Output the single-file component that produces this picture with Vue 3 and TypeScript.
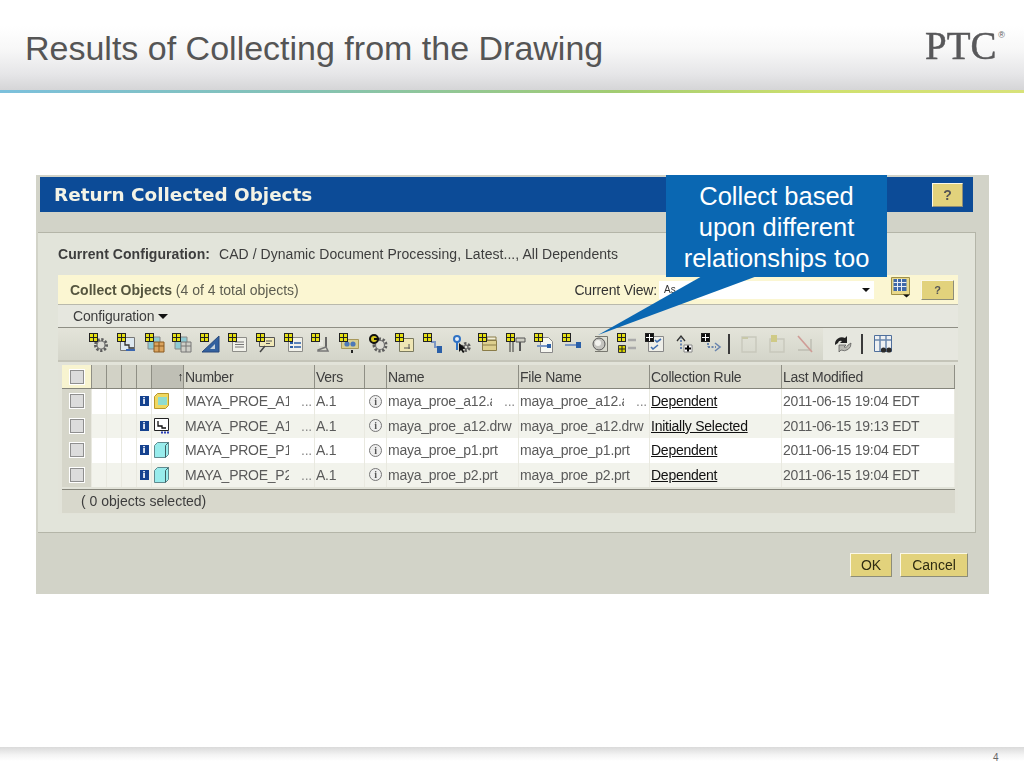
<script setup lang="ts">
interface Shape { d: string; fill?: string; stroke?: string; sw?: number; dash?: string }
interface Tool { badge?: boolean; dark?: boolean; shapes: Shape[] }

const rect = (x: number, y: number, w: number, h: number, fill = 'none', stroke = 'none', sw = 1): Shape => ({
  d: `M${x} ${y}h${w}v${h}h${-w}z`, fill, stroke, sw,
})
const line = (d: string, stroke: string, sw = 1, dash?: string): Shape => ({ d, stroke, sw, dash, fill: 'none' })
const circ = (cx: number, cy: number, r: number, fill = 'none', stroke = 'none', sw = 1, dash?: string): Shape => ({
  d: `M${cx - r} ${cy}a${r} ${r} 0 1 0 ${2 * r} 0a${r} ${r} 0 1 0 ${-2 * r} 0z`, fill, stroke, sw, dash,
})
const gear = (cx: number, cy: number, r = 5.5): Shape[] => [
  circ(cx, cy, r, 'none', '#5d5d5d', 3, '2.2 1.6'),
  circ(cx, cy, r - 1.5, '#dcdcd4', '#6f6f6f', 1.2),
]
const doc = (x = 5, y = 5, w = 14, h = 14): Shape => rect(x + 0.5, y + 0.5, w, h, '#f1f1ea', '#8d8d88')

const tools: Tool[] = [
  { badge: true, shapes: gear(13, 13) },
  { badge: true, shapes: [rect(4.5, 5.5, 14, 13, '#dde8f0', '#777'), line('M9 9v4h4v3h5', '#333', 1.3), line('M10 18h9', '#3a66b0', 2)] },
  { badge: true, shapes: [rect(4, 5, 12, 12, '#8ecbd4', '#888'), rect(10, 10, 10, 10, '#dba45e', '#8a5a20'), line('M15 10v10M10 14h10', '#8a5a20')] },
  { badge: true, shapes: [rect(4, 5, 12, 12, '#8ecbd4', '#888'), rect(10, 10, 10, 10, '#cfcfc8', '#777'), line('M15 10v10M10 14h10', '#777')] },
  { badge: true, shapes: [{ d: 'M3 20L20 4V20z', fill: '#33619f', stroke: '#28497c', sw: 1 }, { d: 'M11 17L16 12V17z', fill: '#c7d2da' }] },
  { badge: true, shapes: [doc(), line('M8 10h9M8 12.500h9M8 15h9', '#777')] },
  { badge: true, shapes: [rect(4.5, 5.5, 15, 9, '#f1e9b8', '#555'), line('M10 14L5 20', '#444', 1.5), line('M11 9h6M11 11.500h4', '#555')] },
  { badge: true, shapes: [doc(), rect(7, 10, 3, 2, '#2a5fa8'), rect(7, 14, 3, 2, '#2a5fa8'), line('M11 11h7M11 15h7', '#2a5fa8', 1.4)] },
  { badge: true, shapes: [line('M16 5v10', '#666', 2), line('M8 18l8-3 2 4H8z', '#777', 1.5), rect(9, 8, 4, 6, '#e9e9e2')] },
  { badge: true, shapes: [rect(3.5, 7.5, 17, 9, '#d8ce90', '#a8985a'), circ(9, 12, 2.6, '#4d79b8'), circ(15, 12, 2.6, '#4d79b8'), rect(13, 18, 2, 3, '#222')] },
  { shapes: [...gear(14, 13, 6), circ(8, 7, 4, '#d8c820', '#111', 2), line('M8 7h5', '#111', 2)] },
  { badge: true, shapes: [rect(5.5, 6.5, 14, 13, '#efe6b4', '#7a7a60'), line('M10 16h6M15 12v5', '#555')] },
  { badge: true, shapes: [line('M9 10h4v5h4', '#7a96c4', 2), rect(15, 14, 5, 7, '#2a5fa8')] },
  { shapes: [circ(8, 7, 3, '#e8eef8', '#2f72c4', 2), line('M8 10v8', '#2f72c4', 2), ...gear(17, 15, 3.4), { d: 'M10 11l0 9 2-2 2 3 1.500-1-2-3 3-.5z', fill: '#111' }] },
  { badge: true, shapes: [rect(5.5, 8.5, 14, 10, '#ddcf8e', '#8a7c48'), line('M6 13h13', '#8a7c48'), rect(10, 5, 9, 3, '#f2efd8', '#8a7c48')] },
  { badge: true, shapes: [line('M5 10v10M8 10v10', '#6d6d68', 1.5), rect(11, 6, 9, 4, '#cfcfc4', '#555'), line('M15 10v9', '#555', 2)] },
  { badge: true, shapes: [{ d: 'M7.500 5.500h8l4 4v11h-12z', fill: '#f6f6f0', stroke: '#888', sw: 1 }, line('M4 14h11', '#7a96c4', 2), rect(14, 12, 4, 4, '#2a5fa8')] },
  { badge: true, shapes: [line('M4 13h12', '#7a96c4', 2), rect(15, 10, 5, 6, '#2a5fa8')] },
  { shapes: [line('M7 4.500h12.500v15H7', '#77776f', 1), circ(11, 12, 6, '#c4c4bf', '#555', 1), circ(10, 11, 3, '#f2f2ee')] },
  { badge: true, shapes: [rect(2.5, 13.5, 7, 7, '#d8d400', '#333'), line('M6 14v6M3 17h6', '#222'), line('M12 8h8M12 16h8', '#aaa', 2.4)] },
  { dark: true, badge: true, shapes: [rect(4.5, 4.5, 15, 15, '#eeeee8', '#888'), line('M11 8l2 2 4-3M7 15l2 2 5-4', '#3f6fb0', 1.6)] },
  { shapes: [line('M9 17V6', '#6a85ae', 2, '2 1.500'), line('M5 9l4-5 4 5', '#333', 1.3), rect(12, 13, 8, 7, '#fff', '#888'), { d: 'M16 13.500v6M13 16.500h6', stroke: '#000', sw: 2, fill: 'none' }] },
  { dark: true, badge: true, shapes: [line('M8 15h8', '#6a85ae', 2, '2 1.500'), line('M8 11v4', '#6a85ae', 2, '2 1.500'), line('M15 11l5 4-5 4', '#6a85ae', 1.6)] },
]
const disabled: Tool[] = [
  { shapes: [line('M5 5h14v15H5z', '#c8c8bc', 1.4), rect(5, 5, 6, 2, '#c8c8a8')] },
  { shapes: [line('M5 7h14v13H5z', '#c8c8bc', 1.4), rect(6, 3, 6, 7, '#cfca86')] },
  { shapes: [line('M5 18h13V7', '#bdbdb2', 1.4), line('M5 4l14 16', '#cf9c96', 1.6)] },
]
const refresh: Tool = { shapes: [
  { d: 'M4 13a7 7 0 0 1 10-7l2-2v7h-7l2-2a3 3 0 0 0-4 2z', fill: '#222' },
  { d: 'M20 11a7 7 0 0 1-10 7l-2 2v-7h7l-2 2a3 3 0 0 0 4-2z', fill: '#b9b9b2', stroke: '#555', sw: 0.7 },
] }
const finder: Tool = { shapes: [
  rect(3.5, 3.5, 17, 16, '#eef0f2', '#4f6f9c'),
  line('M9 4v15M15 4v15M4 8h16', '#6a86ad', 1.5),
  circ(12.5, 18, 2.6, '#2a2a2a'), circ(18, 18, 2.6, '#2a2a2a'),
] }

interface Row { number: string; name: string; nameCut: boolean; file: string; rule: string; modified: string; kind: 'asm' | 'drw' | 'prt' }
const rows: Row[] = [
  { number: 'MAYA_PROE_A12', name: 'maya_proe_a12.asm', nameCut: true, file: 'maya_proe_a12.asm', rule: 'Dependent', modified: '2011-06-15 19:04 EDT', kind: 'asm' },
  { number: 'MAYA_PROE_A12', name: 'maya_proe_a12.drw', nameCut: false, file: 'maya_proe_a12.drw', rule: 'Initially Selected', modified: '2011-06-15 19:13 EDT', kind: 'drw' },
  { number: 'MAYA_PROE_P1', name: 'maya_proe_p1.prt', nameCut: false, file: 'maya_proe_p1.prt', rule: 'Dependent', modified: '2011-06-15 19:04 EDT', kind: 'prt' },
  { number: 'MAYA_PROE_P2', name: 'maya_proe_p2.prt', nameCut: false, file: 'maya_proe_p2.prt', rule: 'Dependent', modified: '2011-06-15 19:04 EDT', kind: 'prt' },
]
</script>

<template>
  <div class="page">
    <header class="head">
      <h1 class="title">Results of Collecting from the Drawing</h1>
      <div class="logo"><span class="logo-text">PTC</span><sup class="reg">®</sup></div>
    </header>
    <div class="rule-line"></div>

    <main class="stage">
      <section class="dialog">
        <div class="dialog-bar">
          <span class="dialog-title">Return Collected Objects</span>
          <button class="gold help-big" type="button">?</button>
        </div>

        <div class="panel">
          <p class="config"><b>Current Configuration:</b><span>CAD / Dynamic Document Processing, Latest..., All Dependents</span></p>

          <div class="table-box">
            <div class="table-head">
              <span class="table-name"><b>Collect Objects</b> (4 of 4 total objects)</span>
              <span class="view-label">Current View:</span>
              <div class="select"><span class="select-val">As</span><i class="caret"></i></div>
              <svg class="view-icon" width="20" height="21" viewBox="0 0 20 21">
                <path d="M.5.5h18v17H.5z" fill="#e9d98a" stroke="#a09048" />
                <path d="M2.500 2h13v12h-13z" fill="#3f68a8" />
                <path d="M6.500 2v12M10.500 2v12M2.500 5.500h13M2.500 9.500h13" stroke="#e9edf2" />
                <path d="M12 17.500h7l-3.500 3z" fill="#111" />
              </svg>
              <button class="gold help-small" type="button">?</button>
            </div>

            <div class="menu-bar"><span>Configuration</span><i class="caret menu-caret"></i></div>

            <div class="toolbar">
              <div class="tools">
                <span v-for="(t, i) in tools" :key="i" class="tool">
                  <svg width="24" height="24" viewBox="0 0 24 24">
                    <path v-for="(s, j) in t.shapes" :key="j" :d="s.d" :fill="s.fill ?? 'none'" :stroke="s.stroke ?? 'none'" :stroke-width="s.sw ?? 1" :stroke-dasharray="s.dash" />
                    <g v-if="t.badge">
                      <rect x="1.500" y="1.500" width="8" height="8" :fill="t.dark ? '#111' : '#e6e014'" stroke="#222" />
                      <path d="M5.500 2v7M2 5.500h7" :stroke="t.dark ? '#fff' : '#222'" />
                    </g>
                  </svg>
                </span>
                <i class="sep sep-first"></i>
                <span v-for="(t, i) in disabled" :key="'d' + i" class="tool">
                  <svg width="24" height="24" viewBox="0 0 24 24">
                    <path v-for="(s, j) in t.shapes" :key="j" :d="s.d" :fill="s.fill ?? 'none'" :stroke="s.stroke ?? 'none'" :stroke-width="s.sw ?? 1" />
                  </svg>
                </span>
              </div>
              <span class="tool tool-refresh">
                <svg width="24" height="24" viewBox="0 0 24 24">
                  <path v-for="(s, j) in refresh.shapes" :key="j" :d="s.d" :fill="s.fill ?? 'none'" :stroke="s.stroke ?? 'none'" :stroke-width="s.sw ?? 1" />
                </svg>
              </span>
              <i class="sep sep-second"></i>
              <span class="tool">
                <svg width="24" height="24" viewBox="0 0 24 24">
                  <path v-for="(s, j) in finder.shapes" :key="j" :d="s.d" :fill="s.fill ?? 'none'" :stroke="s.stroke ?? 'none'" :stroke-width="s.sw ?? 1" />
                </svg>
              </span>
            </div>

            <div class="grid">
              <div class="grid-row grid-header">
                <span class="c-check c-check-head"><i class="box"></i></span>
                <span class="c-blank"></span><span class="c-blank"></span><span class="c-blank"></span><span class="c-blank"></span>
                <span class="c-sorted"><em>↑</em></span>
                <span>Number</span><span>Vers</span><span></span><span>Name</span><span>File Name</span><span>Collection Rule</span><span>Last Modified</span>
              </div>

              <div v-for="(r, i) in rows" :key="i" class="grid-row grid-data" :class="{ alt: i % 2 === 1 }">
                <span class="c-check"><i class="box"></i></span>
                <span></span><span></span><span></span>
                <span class="c-info"><b class="info-square">i</b></span>
                <span class="c-type">
                  <svg width="18" height="18" viewBox="0 0 18 18">
                    <template v-if="r.kind === 'drw'">
                      <path d="M1.500 1.500h14v12h-14z" fill="#fff" stroke="#222" />
                      <path d="M5 4v5h4v2h4" fill="none" stroke="#111" stroke-width="1.300" />
                      <path d="M8 15.500h9" stroke="#2b3fb8" stroke-width="2" stroke-dasharray="2 1" />
                    </template>
                    <template v-else>
                      <path d="M1.500 4.500l3-3h11v12l-3 3h-11z" :fill="r.kind === 'asm' ? '#f0d860' : '#98ecec'" :stroke="r.kind === 'asm' ? '#b8962a' : '#5f8a8f'" />
                      <path v-if="r.kind === 'asm'" d="M5 5h9v8H5z" fill="#8fdcd0" />
                      <path v-else d="M12.500 4.500v12M12.500 4.500l3-3" stroke="#3f5f62" fill="none" />
                    </template>
                  </svg>
                </span>
                <span class="c-cut"><span class="cut">{{ r.number }}</span><span class="dots">...</span></span>
                <span>A.1</span>
                <span class="c-about"><i class="about">i</i></span>
                <span class="c-cut" v-if="r.nameCut"><span class="cut cut-name">{{ r.name }}</span><span class="dots">...</span></span>
                <span v-else>{{ r.name }}</span>
                <span class="c-cut" v-if="r.nameCut"><span class="cut cut-name">{{ r.file }}</span><span class="dots">...</span></span>
                <span v-else>{{ r.file }}</span>
                <span class="rule-link">{{ r.rule }}</span>
                <span>{{ r.modified }}</span>
              </div>
            </div>

            <div class="selected">( 0 objects selected)</div>
          </div>
        </div>

        <div class="actions">
          <button class="gold action" type="button">OK</button>
          <button class="gold action action-cancel" type="button">Cancel</button>
        </div>
      </section>

      <aside class="callout">
        <svg class="pointer" width="170" height="62" viewBox="0 0 170 62">
          <path d="M0 60L106 0H162z" fill="#0a67b2" />
        </svg>
        <div class="callout-box">Collect based<br />upon different<br />relationships too</div>
      </aside>
    </main>

    <footer class="foot"><span class="page-no">4</span></footer>
  </div>
</template>

<style>
html, body { margin: 0; background: #fff; }
</style>

<style scoped>
.page {
  width: 1024px;
  height: 768px;
  display: flex;
  flex-direction: column;
  overflow: hidden;
  font-family: "Liberation Sans", Arial, sans-serif;
  background: #fff;
}
.head {
  height: 90px;
  flex: none;
  box-sizing: border-box;
  padding: 0 19px 0 25px;
  display: flex;
  justify-content: space-between;
  align-items: flex-start;
  background: linear-gradient(#fff 26px, #f7f7f7 50px, #e6e6e8 74px, #d5d5d7 90px);
}
.title {
  margin: 28px 0 0;
  font-weight: 400;
  font-size: 34px;
  line-height: 40px;
  color: #555;
  white-space: nowrap;
}
.logo { display: flex; margin-top: 23px; color: #58585a; }
.logo-text {
  font-family: "Liberation Serif", serif;
  font-size: 41px;
  line-height: 44px;
  -webkit-text-stroke: .5px #58585a;
  display: inline-block;
  transform: scaleX(.95);
  transform-origin: left top;
  width: 73px;
}
.reg { font-size: 9px; line-height: 10px; margin: 7px 0 0; }
.rule-line {
  height: 3px;
  flex: none;
  background: linear-gradient(90deg, #7cc0dc 0%, #84c2b4 30%, #a2cc72 60%, #cfe06e 80%, #d8e27a 100%);
}

.stage { position: relative; flex: 1; }
.dialog {
  position: absolute;
  left: 36px;
  top: 82px;
  width: 953px;
  height: 419px;
  box-sizing: border-box;
  padding: 2px 0 0 2px;
  background: #d2d3c8;
  color: #444;
  filter: blur(.3px);
  font-size: 14px;
}
.dialog-bar {
  margin-left: 2px;
  width: 933px;
  height: 35px;
  box-sizing: border-box;
  background: #0c4b97;
  display: flex;
  align-items: center;
  justify-content: space-between;
  padding: 0 10px 0 14px;
}
.dialog-title {
  font-family: "DejaVu Sans", Verdana, sans-serif;
  font-weight: 700;
  font-size: 18.400px;
  color: #f3f3e6;
  white-space: nowrap;
}
.gold {
  font-family: inherit;
  padding: 0;
  background: #e2d27c;
  color: #33301a;
  border: 1px solid;
  border-color: #fbf8e6 #8d8d78 #8d8d78 #fbf8e6;
  cursor: pointer;
}
.help-big { width: 31px; height: 24px; font-size: 14px; font-weight: 700; color: #555; }
.panel {
  margin-top: 20px;
  width: 938px;
  height: 301px;
  box-sizing: border-box;
  background: #e2e4da;
  border-top: 1px solid #b4b5a8;
  border-right: 1px solid #b4b5a8;
  border-bottom: 1px solid #b4b5a8;
  padding: 0 17px 0 20px;
}
.config {
  margin: 0;
  height: 42px;
  display: flex;
  align-items: center;
  gap: 9px;
  font-size: 14px;
  letter-spacing: .05px;
  color: #3d3d3d;
  white-space: nowrap;
}
.table-box { width: 900px; height: 239px; background: #e2e3d9; display: flex; flex-direction: column; }
.table-head {
  height: 30px;
  flex: none;
  display: flex;
  align-items: center;
  background: #fbf6d2;
  border-bottom: 1px solid #b9b9ac;
  box-sizing: border-box;
  padding: 0 4px 0 12px;
  white-space: nowrap;
}
.table-name { color: #5d5d50; flex: 1; }
.table-name b { color: #55553f; }
.view-label { color: #333; margin-right: 2px; letter-spacing: -.15px; }
.select {
  width: 215px;
  height: 18px;
  background: #fff;
  display: flex;
  align-items: center;
  justify-content: space-between;
  padding: 0 4px 0 5px;
  box-sizing: border-box;
  font-size: 10px;
  margin-right: 17px;
}
.select-val { color: #333; }
.caret {
  width: 0;
  height: 0;
  border-left: 4px solid transparent;
  border-right: 4px solid transparent;
  border-top: 4px solid #111;
}
.view-icon { margin: -4px 10px 0 0; flex: none; }
.help-small { width: 33px; height: 20px; font-size: 11px; font-weight: 700; color: #555; }
.menu-bar {
  height: 23px;
  flex: none;
  box-sizing: border-box;
  display: flex;
  align-items: center;
  gap: 4px;
  padding-left: 15px;
  background: #e6e7df;
  border-bottom: 1px solid #8f8f85;
  color: #3d3d3d;
  letter-spacing: -.15px;
}
.menu-caret { border-left-width: 5px; border-right-width: 5px; border-top-width: 5px; margin-top: 1px; }
.toolbar {
  height: 34px;
  flex: none;
  display: flex;
  background: #e6e7df;
  border-bottom: 2px solid #c4c4b8;
  box-sizing: border-box;
}
.tools {
  width: 765px;
  flex: none;
  display: flex;
  box-sizing: border-box;
  padding-left: 30px;
  background: linear-gradient(#e4e4da, #d4d5ca);
}
.tool { width: 27.800px; flex: none; height: 32px; padding-top: 4px; box-sizing: border-box; display: block; }
.tool svg { display: block; }
.sep { width: 2px; height: 20px; background: #3a3a3a; flex: none; margin-top: 6px; }
.sep-first { margin: 6px 7px 0 1px; }
.tool-refresh { margin-left: 8px; }
.sep-second { margin: 6px 8px 0 2px; }
.grid { margin: 3px 3px 0 4px; letter-spacing: -.25px; }
.grid-row {
  display: grid;
  grid-template-columns: 30px 15px 15px 15px 15px 32px 131px 50px 22px 132px 131px 132px 1fr;
  align-items: stretch;
}
.grid-row > span {
  display: flex;
  align-items: center;
  min-width: 0;
  overflow: hidden;
  white-space: nowrap;
  box-sizing: border-box;
  padding-left: 1px;
  border-right: 1px solid #e9e9e0;
}
.grid-header { height: 24px; background: #d8d8cc; border-bottom: 1px solid #85857b; box-sizing: border-box; color: #3d3d3d; }
.grid-header > span { border-right: 1px solid #8f8f85; }
.c-check-head { background: #f8f4d0; justify-content: center; padding: 0 !important; }
.c-blank { background: #d2d2c6; }
.c-sorted { background: #bfbfb5; justify-content: flex-end; padding-right: 0; }
.c-sorted em { font-style: normal; font-size: 12px; color: #222; }
.box { width: 12px; height: 12px; display: block; background: #dcdcdc; border: 1px solid #8f8f8f; box-shadow: 0 0 0 1px #fff; }
.grid-data { height: 24.500px; background: #fff; color: #5a5a5a; }
.grid-data.alt { background: #f2f3ec; }
.grid-data .c-check { background: #d6d6ca; justify-content: center; padding: 0; }
.c-info { justify-content: center; padding: 0 !important; }
.info-square {
  width: 9px;
  height: 10px;
  background: #15428f;
  color: #fff;
  font: 700 9px/10px "DejaVu Sans", sans-serif;
  text-align: center;
  display: block;
}
.c-type { padding-left: 1px !important; }
.c-cut .cut { width: 104px; overflow: hidden; flex: none; }
.dots { margin-left: 12px; color: #8a8a8a; }
.c-about { justify-content: center; padding: 0 !important; }
.about {
  width: 11px;
  height: 11px;
  border: 1px solid #777;
  border-radius: 50%;
  background: #eee;
  display: block;
  text-align: center;
  font: 700 10px/11px "Liberation Serif", serif;
  color: #555;
}
.rule-link { color: #111; text-decoration: underline; }
.selected {
  height: 24px;
  margin: 2px 3px 0 4px;
  box-sizing: border-box;
  background: #d8d8cc;
  border-top: 1px solid #85857b;
  padding-left: 19px;
  line-height: 22px;
  color: #3d3d3d;
}
.actions {
  display: flex;
  justify-content: flex-end;
  gap: 8px;
  padding: 20px 21px 0 0;
}
.action { height: 24px; width: 42px; font-size: 14px; color: #2f2c12; }
.action-cancel { width: 68px; }

.callout { position: absolute; left: 666px; top: 82px; width: 221px; height: 102px; }
.callout-box {
  position: relative;
  height: 102px;
  box-sizing: border-box;
  background: #0a67b2;
  color: #fff;
  font-size: 25.500px;
  line-height: 31px;
  padding-top: 6px;
  text-align: center;
  white-space: nowrap;
}
.pointer { position: absolute; left: -68px; top: 100px; }

.foot {
  margin-top: auto;
  height: 21px;
  flex: none;
  position: relative;
  background: linear-gradient(#dadada 0, #f4f4f4 8px, #fff 14px);
}
.page-no { position: absolute; left: 993px; top: 5px; font-size: 10px; line-height: 12px; color: #666; }
</style>
